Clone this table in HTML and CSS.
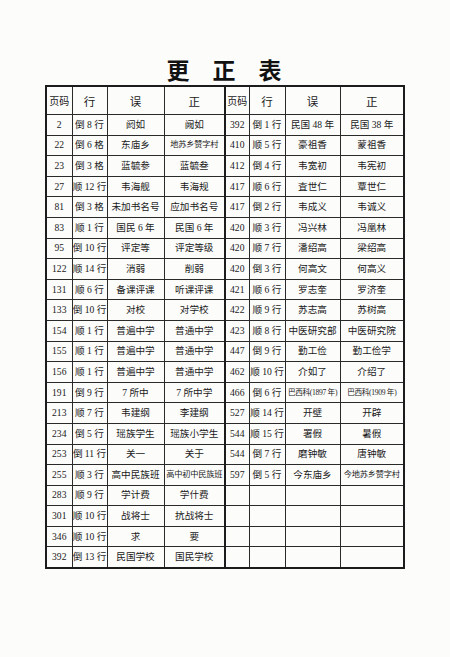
FILE: index.html
```html
<!DOCTYPE html>
<html lang="zh">
<head>
<meta charset="utf-8">
<title>更正表</title>
<link rel="stylesheet" href="styles.css">
</head>
<body>
<div class="page">
  <h1 class="title">更正表</h1>
  <table class="errata">
    <colgroup>
      <col class="c-pg"><col class="c-ln"><col class="c-wr"><col class="c-rt">
      <col class="c-pg2"><col class="c-ln2"><col class="c-wr2"><col class="c-rt2">
    </colgroup>
    <thead>
      <tr>
        <th class="pg">页码</th><th>行</th><th>误</th><th class="mid">正</th>
        <th class="pg">页码</th><th>行</th><th>误</th><th>正</th>
      </tr>
    </thead>
    <tbody>
      <tr><td>2</td><td>倒 8 行</td><td>阏如</td><td class="mid">阙如</td><td>392</td><td>倒 1 行</td><td>民国 48 年</td><td>民国 38 年</td></tr>
      <tr><td>22</td><td>倒 6 格</td><td>东庙乡</td><td class="mid sm">地苏乡赞字村</td><td>410</td><td>顺 5 行</td><td>豪祖香</td><td>蒙祖香</td></tr>
      <tr><td>23</td><td>倒 3 格</td><td>蓝毓参</td><td class="mid">蓝毓叁</td><td>412</td><td>倒 4 行</td><td>韦宽初</td><td>韦宪初</td></tr>
      <tr><td>27</td><td>顺 12 行</td><td>韦海舰</td><td class="mid">韦海规</td><td>417</td><td>顺 6 行</td><td>査世仁</td><td>覃世仁</td></tr>
      <tr><td>81</td><td>倒 3 格</td><td>未加书名号</td><td class="mid">应加书名号</td><td>417</td><td>倒 2 行</td><td>韦成义</td><td>韦诚义</td></tr>
      <tr><td>83</td><td>顺 1 行</td><td>国民 6 年</td><td class="mid">民国 6 年</td><td>420</td><td>顺 3 行</td><td>冯兴林</td><td>冯凰林</td></tr>
      <tr><td>95</td><td>倒 10 行</td><td>评定等</td><td class="mid">评定等级</td><td>420</td><td>顺 7 行</td><td>潘绍高</td><td>梁绍高</td></tr>
      <tr><td>122</td><td>顺 14 行</td><td>消弱</td><td class="mid">削弱</td><td>420</td><td>倒 3 行</td><td>何高文</td><td>何高义</td></tr>
      <tr><td>131</td><td>顺 6 行</td><td>备课评课</td><td class="mid">听课评课</td><td>421</td><td>顺 6 行</td><td>罗志奎</td><td>罗济奎</td></tr>
      <tr><td>133</td><td>倒 10 行</td><td>对校</td><td class="mid">对学校</td><td>422</td><td>顺 9 行</td><td>苏志高</td><td>苏树高</td></tr>
      <tr><td>154</td><td>顺 1 行</td><td>普遍中学</td><td class="mid">普通中学</td><td>423</td><td>顺 8 行</td><td>中医研究部</td><td>中医研究院</td></tr>
      <tr><td>155</td><td>顺 1 行</td><td>普遍中学</td><td class="mid">普通中学</td><td>447</td><td>倒 9 行</td><td>勤工俭</td><td>勤工俭学</td></tr>
      <tr><td>156</td><td>顺 1 行</td><td>普遍中学</td><td class="mid">普通中学</td><td>462</td><td>顺 10 行</td><td>介如了</td><td>介绍了</td></tr>
      <tr><td>191</td><td>倒 9 行</td><td>7 所中</td><td class="mid">7 所中学</td><td>466</td><td>倒 6 行</td><td class="xs">巴西科(1897 年)</td><td class="xs">巴西科(1909 年)</td></tr>
      <tr><td>213</td><td>顺 7 行</td><td>韦建纲</td><td class="mid">李建纲</td><td>527</td><td>顺 14 行</td><td>开壁</td><td>开辟</td></tr>
      <tr><td>234</td><td>倒 5 行</td><td>瑶族学生</td><td class="mid">瑶族小学生</td><td>544</td><td>顺 15 行</td><td>署假</td><td>暑假</td></tr>
      <tr><td>253</td><td>倒 11 行</td><td>关一</td><td class="mid">关于</td><td>544</td><td>倒 7 行</td><td>磨钟敏</td><td>唐钟敏</td></tr>
      <tr><td>255</td><td>顺 3 行</td><td>高中民族班</td><td class="mid sm">高中初中民族班</td><td>597</td><td>倒 5 行</td><td>今东庙乡</td><td class="sm">今地苏乡赞字村</td></tr>
      <tr><td>283</td><td>顺 9 行</td><td>学计费</td><td class="mid">学什费</td><td></td><td></td><td></td><td></td></tr>
      <tr><td>301</td><td>顺 10 行</td><td>战将士</td><td class="mid">抗战将士</td><td></td><td></td><td></td><td></td></tr>
      <tr><td>346</td><td>顺 10 行</td><td>求</td><td class="mid">要</td><td></td><td></td><td></td><td></td></tr>
      <tr><td>392</td><td>倒 13 行</td><td>民国学校</td><td class="mid">国民学校</td><td></td><td></td><td></td><td></td></tr>
    </tbody>
  </table>
</div>
</body>
</html>
```
FILE: styles.css
```css
html, body {
  margin: 0;
  padding: 0;
  background: #fcfcfb;
}

.page {
  width: 358px;
  padding: 57px 0 0 45px;
  display: flex;
  flex-direction: column;
}

.title {
  margin: 0 0 4px 0;
  font-family: "Noto Sans CJK SC", sans-serif;
  font-weight: 700;
  font-size: 23px;
  line-height: 24px;
  letter-spacing: 23px;
  text-indent: 23px;
  text-align: center;
  color: #111;
}

.errata {
  border-collapse: collapse;
  table-layout: fixed;
  width: 358px;
  border: 2px solid #1c1c1c;
  font-family: "Liberation Serif", "Noto Sans CJK SC", serif;
  color: #1a1a1a;
}

.c-pg { width: 26px; }
.c-ln { width: 35px; }
.c-wr { width: 57px; }
.c-rt { width: 61px; }
.c-pg2 { width: 24px; }
.c-ln2 { width: 36px; }
.c-wr2 { width: 55px; }
.c-rt2 { width: 64px; }

.errata th,
.errata td {
  border: 1px solid #2a2a2a;
  padding: 0;
  text-align: center;
  white-space: nowrap;
  overflow: hidden;
}

.errata th {
  height: 27px;
  font-family: "Noto Sans CJK SC", sans-serif;
  font-weight: 400;
  font-size: 11.5px;
}

.errata th.pg {
  font-size: 10px;
}

.errata td {
  height: 19.6px;
  font-size: 9.6px;
  line-height: 12px;
}

.errata .mid {
  border-right: 2px solid #1c1c1c;
}

.errata td.sm {
  font-size: 8.2px;
  letter-spacing: -0.2px;
}

.errata td.xs {
  font-size: 7.6px;
  letter-spacing: -0.3px;
}
```
